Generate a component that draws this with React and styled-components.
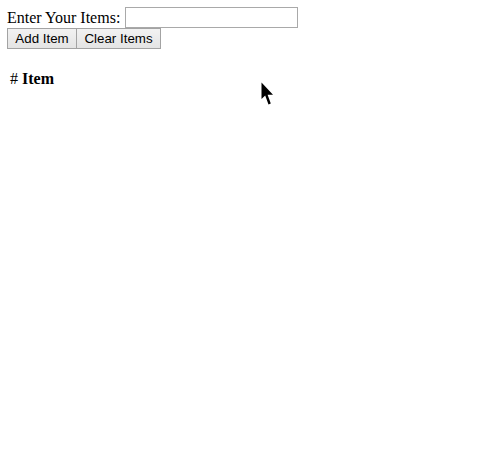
import React from 'react';
import styled, { createGlobalStyle } from 'styled-components';

const Global = createGlobalStyle`
  body {
    margin: 7px;
    font-family: 'Liberation Serif', 'Times New Roman', serif;
    font-size: 16px;
    color: #000;
    background: #fff;
  }
`;

const Page = styled.div`
  position: relative;
  min-height: 435px;
`;

const Row = styled.div`
  display: flex;
  align-items: center;
  line-height: 18px;
`;

const Input = styled.input`
  box-sizing: border-box;
  width: 173px;
  height: 21px;
  margin: 0 0 0 5px;
  padding: 1px 2px;
  border: 1px solid #a9a9a9;
  font-family: 'Liberation Sans', Arial, sans-serif;
  font-size: 13.33px;
  outline: none;
`;

const Buttons = styled.div`
  display: flex;
`;

const Button = styled.button`
  box-sizing: border-box;
  width: ${p => p.$w}px;
  height: 21px;
  padding: 1px 0;
  margin: 0;
  font-family: 'Liberation Sans', Arial, sans-serif;
  font-size: 13.33px;
  color: #000;
  background: linear-gradient(#f2f2f2, #e4e4e4);
  border: 1px solid #a3a3a3;
  border-radius: 0;
  + button {
    margin-left: -1px;
  }
`;

const Table = styled.table`
  margin-top: 18px;
  border-spacing: 2px;
  td, th {
    padding: 1px;
  }
`;

const HashCell = styled.td`
  font-weight: normal;
`;

const HeadCell = styled.th`
  font-weight: bold;
`;

const Cursor = styled.svg`
  position: absolute;
  left: 254px;
  top: 75px;
`;

export default function App() {
  return (
    <Page>
      <Global />
      <Row>
        <span>Enter Your Items:</span>
        <Input type="text" />
      </Row>
      <Buttons>
        <Button $w={70}>Add Item</Button>
        <Button $w={85}>Clear Items</Button>
      </Buttons>
      <Table>
        <tbody>
          <tr>
            <HashCell>#</HashCell>
            <HeadCell>Item</HeadCell>
          </tr>
        </tbody>
      </Table>
      <Cursor width="14" height="24" viewBox="0 0 14 24">
        <path d="M0.5 0.5 L0.5 17 L4.2 13.4 L7.5 22.5 L9.8 21.6 L6.6 12.8 L12 12.8 Z" fill="#000" />
      </Cursor>
    </Page>
  );
}
